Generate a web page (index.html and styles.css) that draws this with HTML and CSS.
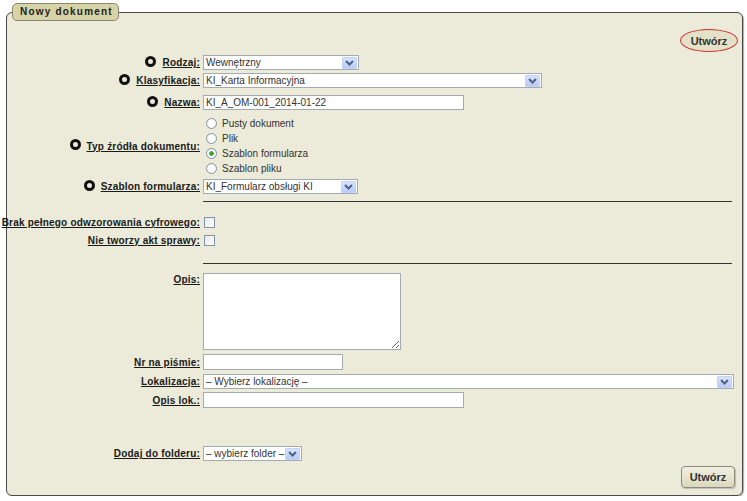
FILE: index.html
```html
<!DOCTYPE html>
<html lang="pl">
<head>
    <meta charset="UTF-8">
    <title>Nowy dokument</title>
    <link rel="stylesheet" href="styles.css">
</head>
<body>
    <form class="doc-form">
    <fieldset class="panel">
        <legend class="panel-title">Nowy dokument</legend>

        <div class="actions actions-top">
            <button type="button" class="btn btn-focus">Utwórz</button>
        </div>

        <div class="row row-rodzaj">
            <div class="lbl"><span class="req"></span><u>Rodzaj:</u></div>
            <div class="select w-rodzaj">
                <select><option>Wewnętrzny</option></select>
                <span class="arrow"><svg width="9" height="6" viewBox="0 0 9 6"><path d="M1 1 L4.5 4.5 L8 1" fill="none" stroke="#4d6185" stroke-width="2"/></svg></span>
            </div>
        </div>

        <div class="row row-klas">
            <div class="lbl"><span class="req"></span><u>Klasyfikacja:</u></div>
            <div class="select w-klas">
                <select><option>KI_Karta Informacyjna</option></select>
                <span class="arrow"><svg width="9" height="6" viewBox="0 0 9 6"><path d="M1 1 L4.5 4.5 L8 1" fill="none" stroke="#4d6185" stroke-width="2"/></svg></span>
            </div>
        </div>

        <div class="row row-nazwa">
            <div class="lbl"><span class="req"></span><u>Nazwa:</u></div>
            <input type="text" class="text w-nazwa" value="KI_A_OM-001_2014-01-22">
        </div>

        <div class="row row-typ">
            <div class="lbl"><span class="req"></span><u>Typ źródła dokumentu:</u></div>
            <div class="radios">
                <label class="radio"><input type="radio" name="typ"> Pusty dokument</label>
                <label class="radio"><input type="radio" name="typ"> Plik</label>
                <label class="radio"><input type="radio" name="typ" checked> Szablon formularza</label>
                <label class="radio"><input type="radio" name="typ"> Szablon pliku</label>
            </div>
        </div>

        <div class="row row-szablon">
            <div class="lbl"><span class="req"></span><u>Szablon formularza:</u></div>
            <div class="select w-szablon">
                <select><option>KI_Formularz obsługi KI</option></select>
                <span class="arrow"><svg width="9" height="6" viewBox="0 0 9 6"><path d="M1 1 L4.5 4.5 L8 1" fill="none" stroke="#4d6185" stroke-width="2"/></svg></span>
            </div>
        </div>

        <div class="row row-sep1">
            <div class="lbl"></div>
            <div class="sep"></div>
        </div>

        <div class="row row-brak">
            <div class="lbl"><u>Brak pełnego odwzorowania cyfrowego:</u></div>
            <input type="checkbox" class="check">
        </div>

        <div class="row row-akt">
            <div class="lbl"><u>Nie tworzy akt sprawy:</u></div>
            <input type="checkbox" class="check">
        </div>

        <div class="row row-sep2">
            <div class="lbl"></div>
            <div class="sep"></div>
        </div>

        <div class="row row-opis">
            <div class="lbl lbl-top"><u>Opis:</u></div>
            <textarea class="area"></textarea>
        </div>

        <div class="row row-nr">
            <div class="lbl"><u>Nr na piśmie:</u></div>
            <input type="text" class="text w-nr">
        </div>

        <div class="row row-lok">
            <div class="lbl"><u>Lokalizacja:</u></div>
            <div class="select w-lok">
                <select><option>– Wybierz lokalizację –</option></select>
                <span class="arrow"><svg width="9" height="6" viewBox="0 0 9 6"><path d="M1 1 L4.5 4.5 L8 1" fill="none" stroke="#4d6185" stroke-width="2"/></svg></span>
            </div>
        </div>

        <div class="row row-opislok">
            <div class="lbl"><u>Opis lok.:</u></div>
            <input type="text" class="text w-opislok">
        </div>

        <div class="row row-folder">
            <div class="lbl"><u>Dodaj do folderu:</u></div>
            <div class="select w-folder">
                <select><option>– wybierz folder –</option></select>
                <span class="arrow"><svg width="9" height="6" viewBox="0 0 9 6"><path d="M1 1 L4.5 4.5 L8 1" fill="none" stroke="#4d6185" stroke-width="2"/></svg></span>
            </div>
        </div>

        <div class="actions actions-bottom">
            <button type="button" class="btn">Utwórz</button>
        </div>
    </fieldset>
    </form>
</body>
</html>
```

FILE: styles.css
```css
body {
    margin: 0;
    background: #fff;
    font-family: 'Liberation Sans', Arial, sans-serif;
    font-size: 10px;
    color: #1a1a1a;
}

.doc-form {
    margin: 0;
}

.panel {
    margin: 3px 4px 0 6px;
    padding: 0 0 7px 0;
    width: 737px;
    box-sizing: border-box;
    min-width: 0;
    background: #ecead9;
    border: 1px solid #4a4a4a;
    border-radius: 6px;
    box-shadow: 1px 1px 1px #aaa;
}

.panel-title {
    margin-left: 5px;
    padding: 0 5px 0 7px;
    height: 18px;
    box-sizing: border-box;
    line-height: 16px;
    background: #d6d3a6;
    border: 1px solid #8a8670;
    border-radius: 5px;
    font-weight: bold;
    font-size: 10px;
    letter-spacing: 1.2px;
    color: #222;
}

/* buttons */
.actions {
    display: flex;
    justify-content: flex-end;
}

.actions-top {
    padding-top: 8px;
    padding-right: 4px;
}

.actions-bottom {
    margin-top: 5px;
    padding-right: 7px;
}

.btn {
    height: 22px;
    width: 54px;
    padding: 0;
    font-family: 'Liberation Sans', Arial, sans-serif;
    font-size: 11px;
    font-weight: bold;
    color: #333;
    background: linear-gradient(#f1efe2, #dcd8bd);
    border: 1px solid #8b8a7c;
    border-radius: 4px;
    box-shadow: 1px 1px 1px #bbb;
}

.btn-focus {
    width: 58px;
    height: 23px;
    border: 1px solid #cc3333;
    border-radius: 50%;
    background: #e4e1c9;
    box-shadow: none;
}

/* rows */
.row {
    display: flex;
    align-items: center;
    gap: 3px;
}

.lbl {
    width: 193px;
    flex: none;
    display: flex;
    justify-content: flex-end;
    align-items: center;
    white-space: nowrap;
    font-weight: bold;
    letter-spacing: 0.2px;
    color: #1a1a1a;
}

.lbl-top {
    align-self: flex-start;
    padding-top: 1px;
}

.req {
    width: 5px;
    height: 5px;
    border: 3px solid #111;
    border-radius: 50%;
    margin-right: 6px;
    margin-top: -3px;
}

.row-rodzaj { margin-top: 3px; }
.row-klas { margin-top: 3px; }
.row-nazwa { margin-top: 7px; }
.row-typ { margin-top: 6px; }
.row-szablon { margin-top: 3px; }
.row-sep1 { margin-top: 7px; }
.row-brak { margin-top: 12px; height: 16px; }
.row-akt { margin-top: 2px; height: 16px; }
.row-sep2 { margin-top: 15px; }
.row-opis { margin-top: 9px; }
.row-nr { margin-top: 4px; }
.row-lok { margin-top: 4px; }
.row-opislok { margin-top: 3px; }
.row-folder { margin-top: 38px; }

.sep {
    width: 529px;
    height: 1px;
    background: #333;
}

/* controls */
.select {
    display: flex;
    align-items: center;
    height: 15px;
    box-sizing: border-box;
    background: #fff;
    border: 1px solid #a3aab1;
}

.select select {
    flex: 1;
    min-width: 0;
    height: 13px;
    padding: 0 0 0 2px;
    border: none;
    background: transparent;
    appearance: none;
    -webkit-appearance: none;
    font-family: 'Liberation Sans', Arial, sans-serif;
    font-size: 10px;
    color: #333;
    outline: none;
}

.arrow {
    flex: none;
    width: 15px;
    height: 12px;
    margin-right: 1px;
    display: flex;
    align-items: center;
    justify-content: center;
    background: linear-gradient(#d8e4fd, #b8cbf6);
    border: 1px solid #c3d3f7;
    box-sizing: border-box;
    border-radius: 1px;
}

.w-rodzaj { width: 156px; }
.w-klas { width: 339px; }
.w-szablon { width: 155px; }
.w-lok { width: 531px; }
.w-folder { width: 99px; }

.text {
    height: 15px;
    box-sizing: border-box;
    margin: 0;
    padding: 0 2px;
    border: 1px solid #a3aab1;
    background: #fff;
    font-family: 'Liberation Sans', Arial, sans-serif;
    font-size: 10px;
    color: #333;
}

.w-nazwa { width: 261px; }
.w-nr { width: 140px; height: 16px; }
.w-opislok { width: 261px; height: 16px; }

.area {
    width: 198px;
    height: 77px;
    box-sizing: border-box;
    margin: 0;
    border: 1px solid #a3aab1;
    background: #fff;
    font-family: 'Liberation Sans', Arial, sans-serif;
    font-size: 10px;
}

.radios {
    display: flex;
    flex-direction: column;
}

.radio {
    height: 15px;
    display: flex;
    align-items: center;
    gap: 5px;
    padding-left: 3px;
    color: #333;
}

.radio input {
    appearance: none;
    -webkit-appearance: none;
    margin: 0;
    width: 11px;
    height: 11px;
    border: 1px solid #8493a3;
    border-radius: 50%;
    background: radial-gradient(circle, #fff 40%, #e6e8ea);
}

.radio input:checked {
    background: radial-gradient(circle, #2ea62e 0 2px, #fff 2.5px 40%, #e6e8ea);
}

.check {
    appearance: none;
    -webkit-appearance: none;
    margin: 0 0 0 1px;
    width: 11px;
    height: 11px;
    border: 1px solid #8493a3;
    background: linear-gradient(135deg, #e6e8ea, #fff);
}
```
